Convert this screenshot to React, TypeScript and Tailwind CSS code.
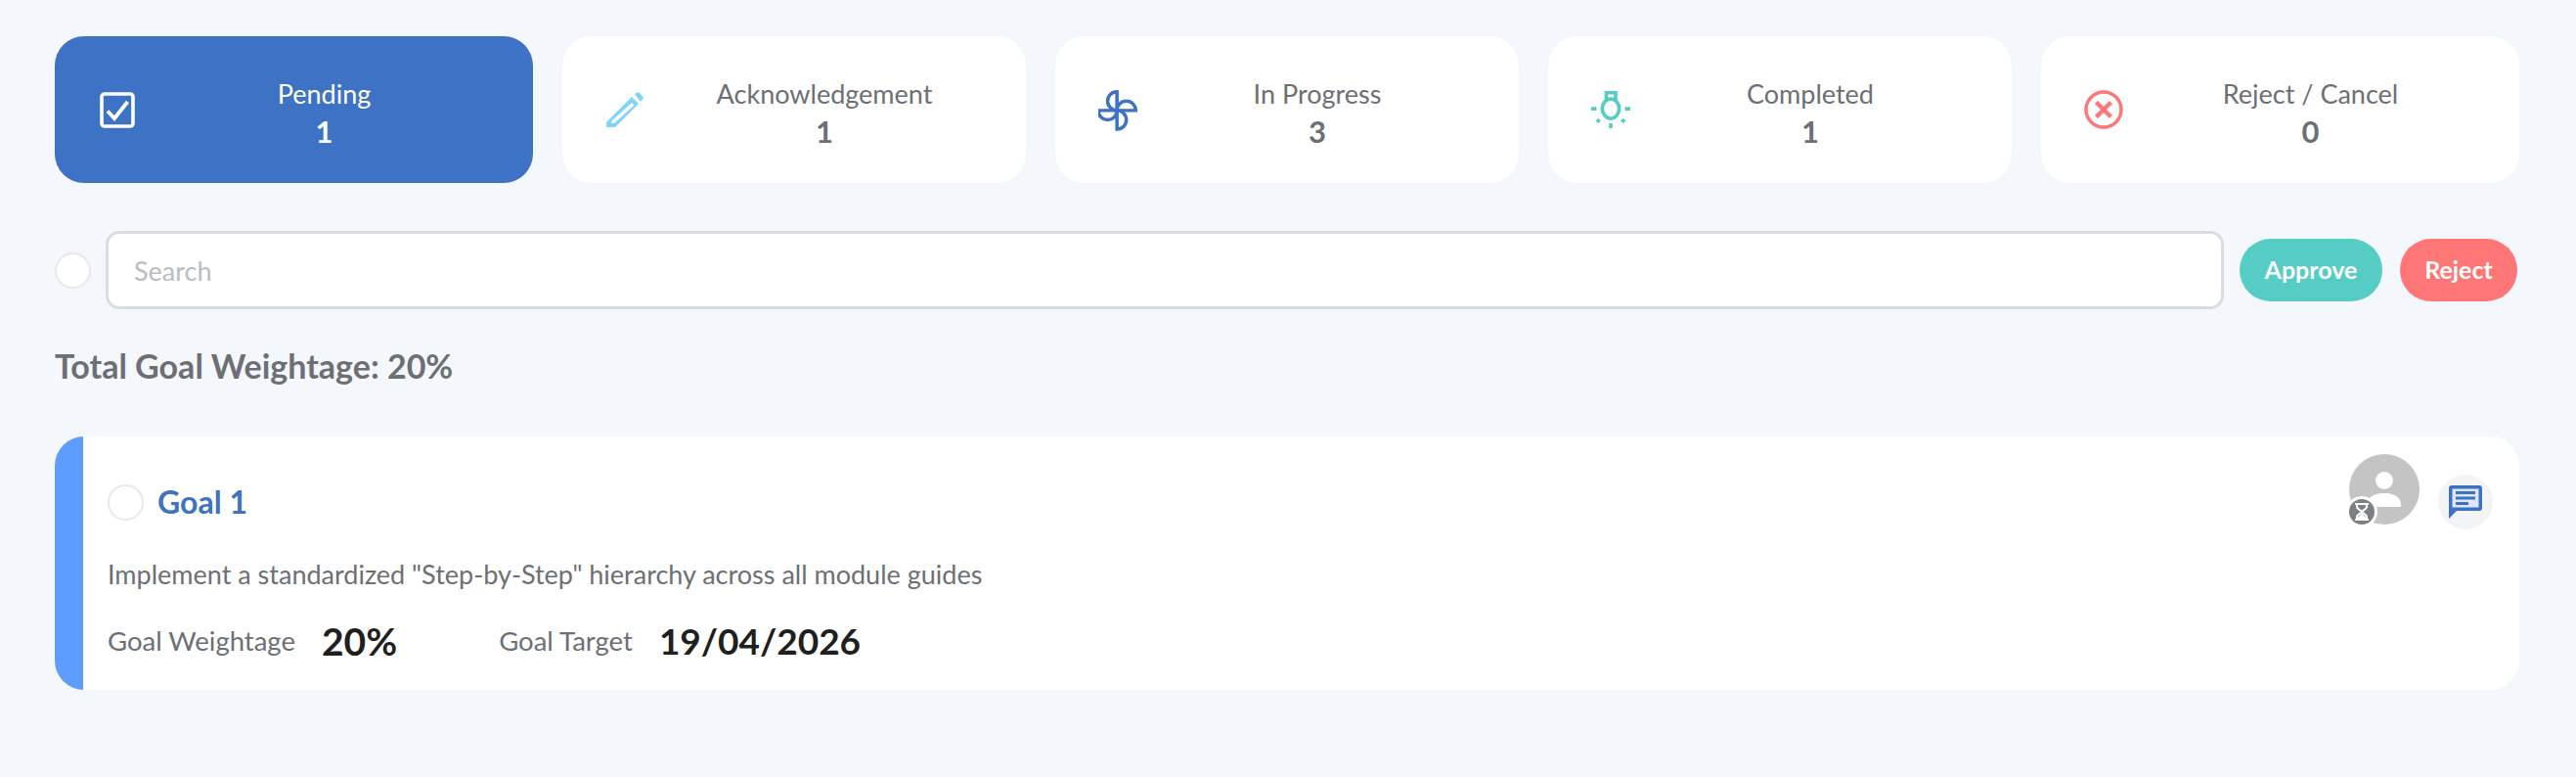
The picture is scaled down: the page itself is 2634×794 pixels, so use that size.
import type { ReactNode } from 'react';

const CheckIcon = () => (
    <svg width="36" height="37" viewBox="0 0 36 37" fill="none" stroke="#fff">
        <rect x="2" y="2" width="32" height="33" rx="3" strokeWidth="3.6" />
        <path d="M8 19.5 L15 27 L28.5 10" strokeWidth="3.8" />
    </svg>
);

const PencilIcon = () => (
    <svg width="38" height="36" viewBox="0 0 38 36" fill="none">
        <path d="M29 2 L33 0 L38 6 L35 10 Z" fill="#7dd6f6" />
        <path d="M26 5 L33 12 L9 36 L0 36 L0 31 Z" fill="#7dd6f6" />
        <path d="M26 11 L28.5 13.5 L8 32 L5 32 L5 30 Z" fill="#fff" />
    </svg>
);

const PinwheelIcon = () => (
    <svg width="46" height="46" viewBox="0 0 46 46" fill="none" stroke="#3d72c4" strokeWidth="4">
        <path d="M22 24 V2 A11 11 0 0 0 22 24" />
        <path d="M22 24 H44 A11 11 0 0 0 22 24" />
        <path d="M22 24 V46 A11 11 0 0 0 22 24" />
        <path d="M22 24 H0 A11 11 0 0 0 22 24" />
    </svg>
);

const BulbIcon = () => (
    <svg width="44" height="42" viewBox="0 0 44 42" fill="none" stroke="#56cdc4" strokeWidth="4">
        <path d="M17 10 V2 H27.5 V10" />
        <ellipse cx="22" cy="20" rx="9.5" ry="11" fill="#fff" />
        <path d="M0 20 H6 M38 20 H44 M22 36.5 V42" />
        <path d="M6.5 35 L9.5 32 M37.5 35 L34.5 32" />
    </svg>
);

const CancelIcon = () => (
    <svg width="40" height="40" viewBox="0 0 40 40" fill="none" stroke="#ff7676">
        <circle cx="20" cy="20" r="18" strokeWidth="3.4" />
        <path d="M12.5 12.5 L27.5 27.5 M27.5 12.5 L12.5 27.5" strokeWidth="4.4" />
    </svg>
);

const AvatarIcon = () => (
    <svg className="absolute inset-0" width="72" height="72" viewBox="0 0 72 72" fill="#fff">
        <circle cx="36" cy="27" r="9" />
        <path d="M17 53 C18 44 26 40 36 40 C46 40 54 44 53 54 L17 54 Z" />
    </svg>
);

const HourglassIcon = () => (
    <svg width="16" height="18" viewBox="0 0 16 18" fill="none" stroke="#fff" strokeWidth="2">
        <path d="M1 1 H15 M1 17 H15" />
        <path d="M3 1 V4 C3 6 8 8 8 9 C8 10 3 12 3 14 V17 H13 V14 C13 12 8 10 8 9 C8 8 13 6 13 4 V1" />
        <path d="M4 16 L8 12 L12 16 Z" fill="#fff" />
    </svg>
);

const ChatIcon = () => (
    <svg width="34" height="34" viewBox="0 0 34 34" fill="none">
        <path d="M3 0 H31 C33 0 34 1 34 3 V23 C34 25 33 26 31 26 H8 L0 34 V3 C0 1 1 0 3 0 Z" fill="#3d72c4" />
        <rect x="3.5" y="3.5" width="27" height="19" fill="#dce8f7" />
        <path d="M7 7.5 H27 M7 13 H27 M7 18.5 H20" stroke="#3d72c4" strokeWidth="3" />
    </svg>
);

interface StatCardProps {
    label: string;
    value: number;
    icon: ReactNode;
    width: string;
    active?: boolean;
}

const StatCard = ({ label, value, icon, width, active }: StatCardProps) => (
    <div className={`${width} h-[150px] rounded-[30px] flex items-center pl-11 pr-[22px] ${active ? 'bg-[#3d72c4] text-white' : 'bg-white text-[#6c7075]'}`}>
        <div className="w-10 flex justify-center shrink-0">{icon}</div>
        <div className="flex-1 text-center pt-[8px]">
            <div className="text-[27px] leading-[36px]">{label}</div>
            <div className="text-[31px] leading-[40px] font-bold">{value}</div>
        </div>
    </div>
);

const Radio = () => (
    <span className="block w-[37px] h-[37px] rounded-full bg-white border-2 border-[#e6e8ec] shrink-0" />
);

export default function App() {
    return (
        <div className="min-h-screen bg-[#f4f7fc] pl-14 pr-[58px] pt-[37px] font-['Lato',sans-serif]">
            <div className="flex gap-[30px]">
                <StatCard label="Pending" value={1} icon={<CheckIcon />} width="w-[489px]" active />
                <StatCard label="Acknowledgement" value={1} icon={<PencilIcon />} width="w-[474px]" />
                <StatCard label="In Progress" value={3} icon={<PinwheelIcon />} width="w-[474px]" />
                <StatCard label="Completed" value={1} icon={<BulbIcon />} width="w-[474px]" />
                <StatCard label="Reject / Cancel" value={0} icon={<CancelIcon />} width="w-[489px]" />
            </div>

            <div className="flex items-center mt-[49px]">
                <Radio />
                <input
                    placeholder="Search"
                    className="ml-[15px] w-[2166px] h-[80px] rounded-[14px] border-[3px] border-[#d8dce3] bg-white px-[26px] text-[27px] outline-none placeholder:text-[#b9bcc0]"
                />
                <button className="ml-4 w-[146px] h-16 rounded-full bg-[#56cdc4] text-white text-[25px] font-bold">Approve</button>
                <button className="ml-[18px] w-[120px] h-16 rounded-full bg-[#ff7676] text-white text-[25px] font-bold">Reject</button>
            </div>

            <div className="mt-[38px] text-[34px] leading-[40px] font-bold text-[#6c7075]">Total Goal Weightage: 20%</div>

            <div className="mt-[52px] h-[259px] flex rounded-[30px] bg-white overflow-hidden">
                <div className="w-[29px] bg-[#5c9dfd] shrink-0" />
                <div className="flex-1 pl-[25px] pr-[27px] pt-[18px]">
                    <div className="flex justify-between h-[90px]">
                        <div className="flex items-center gap-[14px] h-[84px] pt-[14px]">
                            <Radio />
                            <span className="text-[32px] font-bold text-[#3d72c4]">Goal 1</span>
                        </div>
                        <div className="flex items-start gap-[19px]">
                            <div className="relative w-[72px] h-[72px] rounded-full bg-[#c4c4c4]">
                                <AvatarIcon />
                                <div className="absolute left-[-3px] top-[43px] w-[32px] h-[32px] rounded-full bg-white flex items-center justify-center">
                                    <div className="w-[26px] h-[26px] rounded-full bg-[#7b8086] flex items-center justify-center">
                                        <HourglassIcon />
                                    </div>
                                </div>
                            </div>
                            <div className="mt-[21px] w-14 h-14 rounded-full bg-[#f3f4f6] flex items-center justify-center">
                                <ChatIcon />
                            </div>
                        </div>
                    </div>
                    <p className="mt-[15px] text-[27px] leading-[36px] text-[#6c7075]">Implement a standardized "Step-by-Step" hierarchy across all module guides</p>
                    <div className="mt-[28px] flex items-center text-[#6c7075] text-[27.5px] leading-[44px]">
                        <span>Goal Weightage</span>
                        <span className="ml-[27px] text-[39px] font-bold text-[#1f1f1f]">20%</span>
                        <span className="ml-[104px]">Goal Target</span>
                        <span className="ml-[27px] text-[37px] font-bold text-[#1f1f1f]">19/04/2026</span>
                    </div>
                </div>
            </div>
        </div>
    );
}
